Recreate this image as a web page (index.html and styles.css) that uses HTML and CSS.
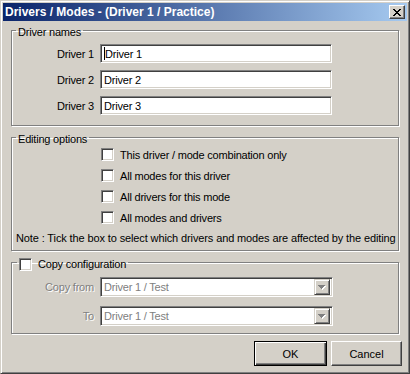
FILE: index.html
```html
<!DOCTYPE html>
<html lang="en">
<head>
    <meta charset="UTF-8">
    <meta name="viewport" content="width=device-width, initial-scale=1.0">
    <title>Drivers / Modes</title>
    <link rel="stylesheet" href="styles.css">
</head>
<body>
    <div class="window">
        <div class="titlebar">
            <span class="title">Drivers / Modes - (Driver 1 / Practice)</span>
            <span class="close">
                <svg width="8" height="7" viewBox="0 0 8 7" shape-rendering="crispEdges">
                    <path fill="#000" d="M0 0h2v1H0z M6 0h2v1H6z M1 1h2v1H1z M5 1h2v1H5z M2 2h4v1H2z M3 3h2v1H3z M2 4h4v1H2z M1 5h2v1H1z M5 5h2v1H5z M0 6h2v1H0z M6 6h2v1H6z"/>
                </svg>
            </span>
        </div>

        <div class="content">
            <fieldset class="group names">
                <legend>Driver names</legend>
                <div class="rows">
                    <div class="row"><span class="label">Driver 1</span><div class="edit"><span class="caret"></span>Driver 1</div></div>
                    <div class="row"><span class="label">Driver 2</span><div class="edit">Driver 2</div></div>
                    <div class="row"><span class="label">Driver 3</span><div class="edit">Driver 3</div></div>
                </div>
            </fieldset>

            <fieldset class="group options">
                <legend>Editing options</legend>
                <div class="checks">
                    <div class="check"><span class="box"></span>This driver / mode combination only</div>
                    <div class="check"><span class="box"></span>All modes for this driver</div>
                    <div class="check"><span class="box"></span>All drivers for this mode</div>
                    <div class="check"><span class="box"></span>All modes and drivers</div>
                </div>
                <p class="note">Note : Tick the box to select which drivers and modes are affected by the editing</p>
            </fieldset>

            <fieldset class="group copy">
                <legend class="check-legend"><span class="box"></span>Copy configuration</legend>
                <div class="rows combos">
                    <div class="row"><span class="label disabled">Copy from</span>
                        <div class="combo"><span class="combo-text">Driver 1 / Test</span>
                            <span class="drop">
                                <svg width="8" height="5" viewBox="0 0 8 5" shape-rendering="crispEdges">
                                    <path fill="#fff" d="M1 1h7v1H1z M2 2h5v1H2z M3 3h3v1H3z M4 4h1v1H4z"/>
                                    <path fill="#808080" d="M0 0h7v1H0z M1 1h5v1H1z M2 2h3v1H2z M3 3h1v1H3z"/>
                                </svg>
                            </span>
                        </div>
                    </div>
                    <div class="row"><span class="label disabled">To</span>
                        <div class="combo"><span class="combo-text">Driver 1 / Test</span>
                            <span class="drop">
                                <svg width="8" height="5" viewBox="0 0 8 5" shape-rendering="crispEdges">
                                    <path fill="#fff" d="M1 1h7v1H1z M2 2h5v1H2z M3 3h3v1H3z M4 4h1v1H4z"/>
                                    <path fill="#808080" d="M0 0h7v1H0z M1 1h5v1H1z M2 2h3v1H2z M3 3h1v1H3z"/>
                                </svg>
                            </span>
                        </div>
                    </div>
                </div>
            </fieldset>

            <div class="buttons">
                <button class="btn default">OK</button>
                <button class="btn cancel">Cancel</button>
            </div>
        </div>
    </div>
</body>
</html>
```

FILE: styles.css
```css
body {
    margin: 0;
    font-family: "Liberation Sans", Arial, sans-serif;
    font-size: 11px;
    letter-spacing: -0.2px;
    color: #000;
}

.window {
    width: 410px;
    height: 374px;
    box-sizing: border-box;
    padding: 2px;
    background: #d4d0c8;
    border: 1px solid;
    border-color: #d4d0c8 #404040 #404040 #d4d0c8;
    box-shadow: inset 1px 1px #fff, inset -1px -1px #808080;
    display: flex;
    flex-direction: column;
}

.titlebar {
    height: 18px;
    flex-shrink: 0;
    padding: 0 2px;
    display: flex;
    align-items: center;
    justify-content: space-between;
    background: linear-gradient(to right, #0a246a, #a6caf0);
    color: #fff;
    font-weight: bold;
    font-size: 12px;
    letter-spacing: 0;
}

.close {
    width: 16px;
    height: 14px;
    box-sizing: border-box;
    background: #d4d0c8;
    border: 1px solid;
    border-color: #fff #404040 #404040 #fff;
    box-shadow: inset -1px -1px #808080;
    display: flex;
    align-items: center;
    justify-content: center;
}

.close svg {
    display: block;
}

.content {
    padding: 0 5px;
    display: flex;
    flex-direction: column;
}

/* etched group box */
.group {
    margin: 0 3px;
    padding: 0;
    min-width: 0;
    border: 1px solid #808080;
    box-shadow: inset 1px 1px #fff, 1px 1px #fff;
}

.group legend {
    margin-left: 4px;
    padding: 4px 2px 0;
    line-height: 13px;
}

.names {
    margin-top: 1px;
}

.options {
    margin-top: 3px;
}

.copy {
    margin-top: 2px;
}

.rows {
    display: flex;
    flex-direction: column;
    gap: 7px;
    padding: 5px 0 10px;
}

.row {
    display: flex;
    align-items: center;
}

.label {
    width: 82px;
    margin-right: 6px;
    text-align: right;
}

.label.disabled {
    color: #808080;
    text-shadow: 1px 1px #fff;
}

.edit {
    width: 232px;
    height: 19px;
    box-sizing: border-box;
    padding-left: 3px;
    background: #fff;
    border: 1px solid;
    border-color: #808080 #fff #fff #808080;
    box-shadow: inset 1px 1px #404040, inset -1px -1px #d4d0c8;
    display: flex;
    align-items: center;
}

.caret {
    width: 1px;
    height: 13px;
    background: #000;
}

.checks {
    display: flex;
    flex-direction: column;
    gap: 8px;
    padding: 2px 0 0 89px;
}

.check {
    display: flex;
    align-items: center;
    height: 13px;
}

.box {
    width: 13px;
    height: 13px;
    flex-shrink: 0;
    box-sizing: border-box;
    margin-right: 6px;
    background: #fff;
    border: 1px solid;
    border-color: #808080 #fff #fff #808080;
    box-shadow: inset 1px 1px #404040, inset -1px -1px #d4d0c8;
}

.note {
    margin: 8px 0 5px 4px;
    line-height: 13px;
    letter-spacing: -0.12px;
    white-space: nowrap;
}

.copy .check-legend {
    display: flex;
    align-items: center;
    padding-top: 5px;
    margin-left: 5px;
}

.combos {
    gap: 9px;
    padding: 6px 0 7px;
}

.combo {
    width: 233px;
    height: 20px;
    box-sizing: border-box;
    padding: 0 2px 0 3px;
    background: #fff;
    border: 1px solid;
    border-color: #808080 #fff #fff #808080;
    box-shadow: inset 1px 1px #404040, inset -1px -1px #d4d0c8;
    display: flex;
    align-items: center;
    justify-content: space-between;
}

.combo-text {
    color: #808080;
}

.drop {
    width: 16px;
    height: 16px;
    box-sizing: border-box;
    background: #d4d0c8;
    border: 1px solid;
    border-color: #d4d0c8 #404040 #404040 #d4d0c8;
    box-shadow: inset 1px 1px #fff, inset -1px -1px #808080;
    display: flex;
    align-items: center;
    justify-content: center;
}

.drop svg {
    display: block;
}

.buttons {
    display: flex;
    justify-content: flex-end;
    gap: 4px;
    margin-top: 7px;
}

.btn {
    height: 25px;
    padding: 0;
    font-family: inherit;
    font-size: 11px;
    letter-spacing: 0;
    color: #000;
    background: #d4d0c8;
    border: 1px solid;
    border-color: #fff #404040 #404040 #fff;
    box-shadow: inset -1px -1px #808080;
}

.btn.default {
    width: 73px;
    border-color: #000;
    box-shadow: inset 1px 1px #fff, inset -1px -1px #404040, inset -2px -2px #808080;
}

.btn.cancel {
    width: 71px;
}
```
